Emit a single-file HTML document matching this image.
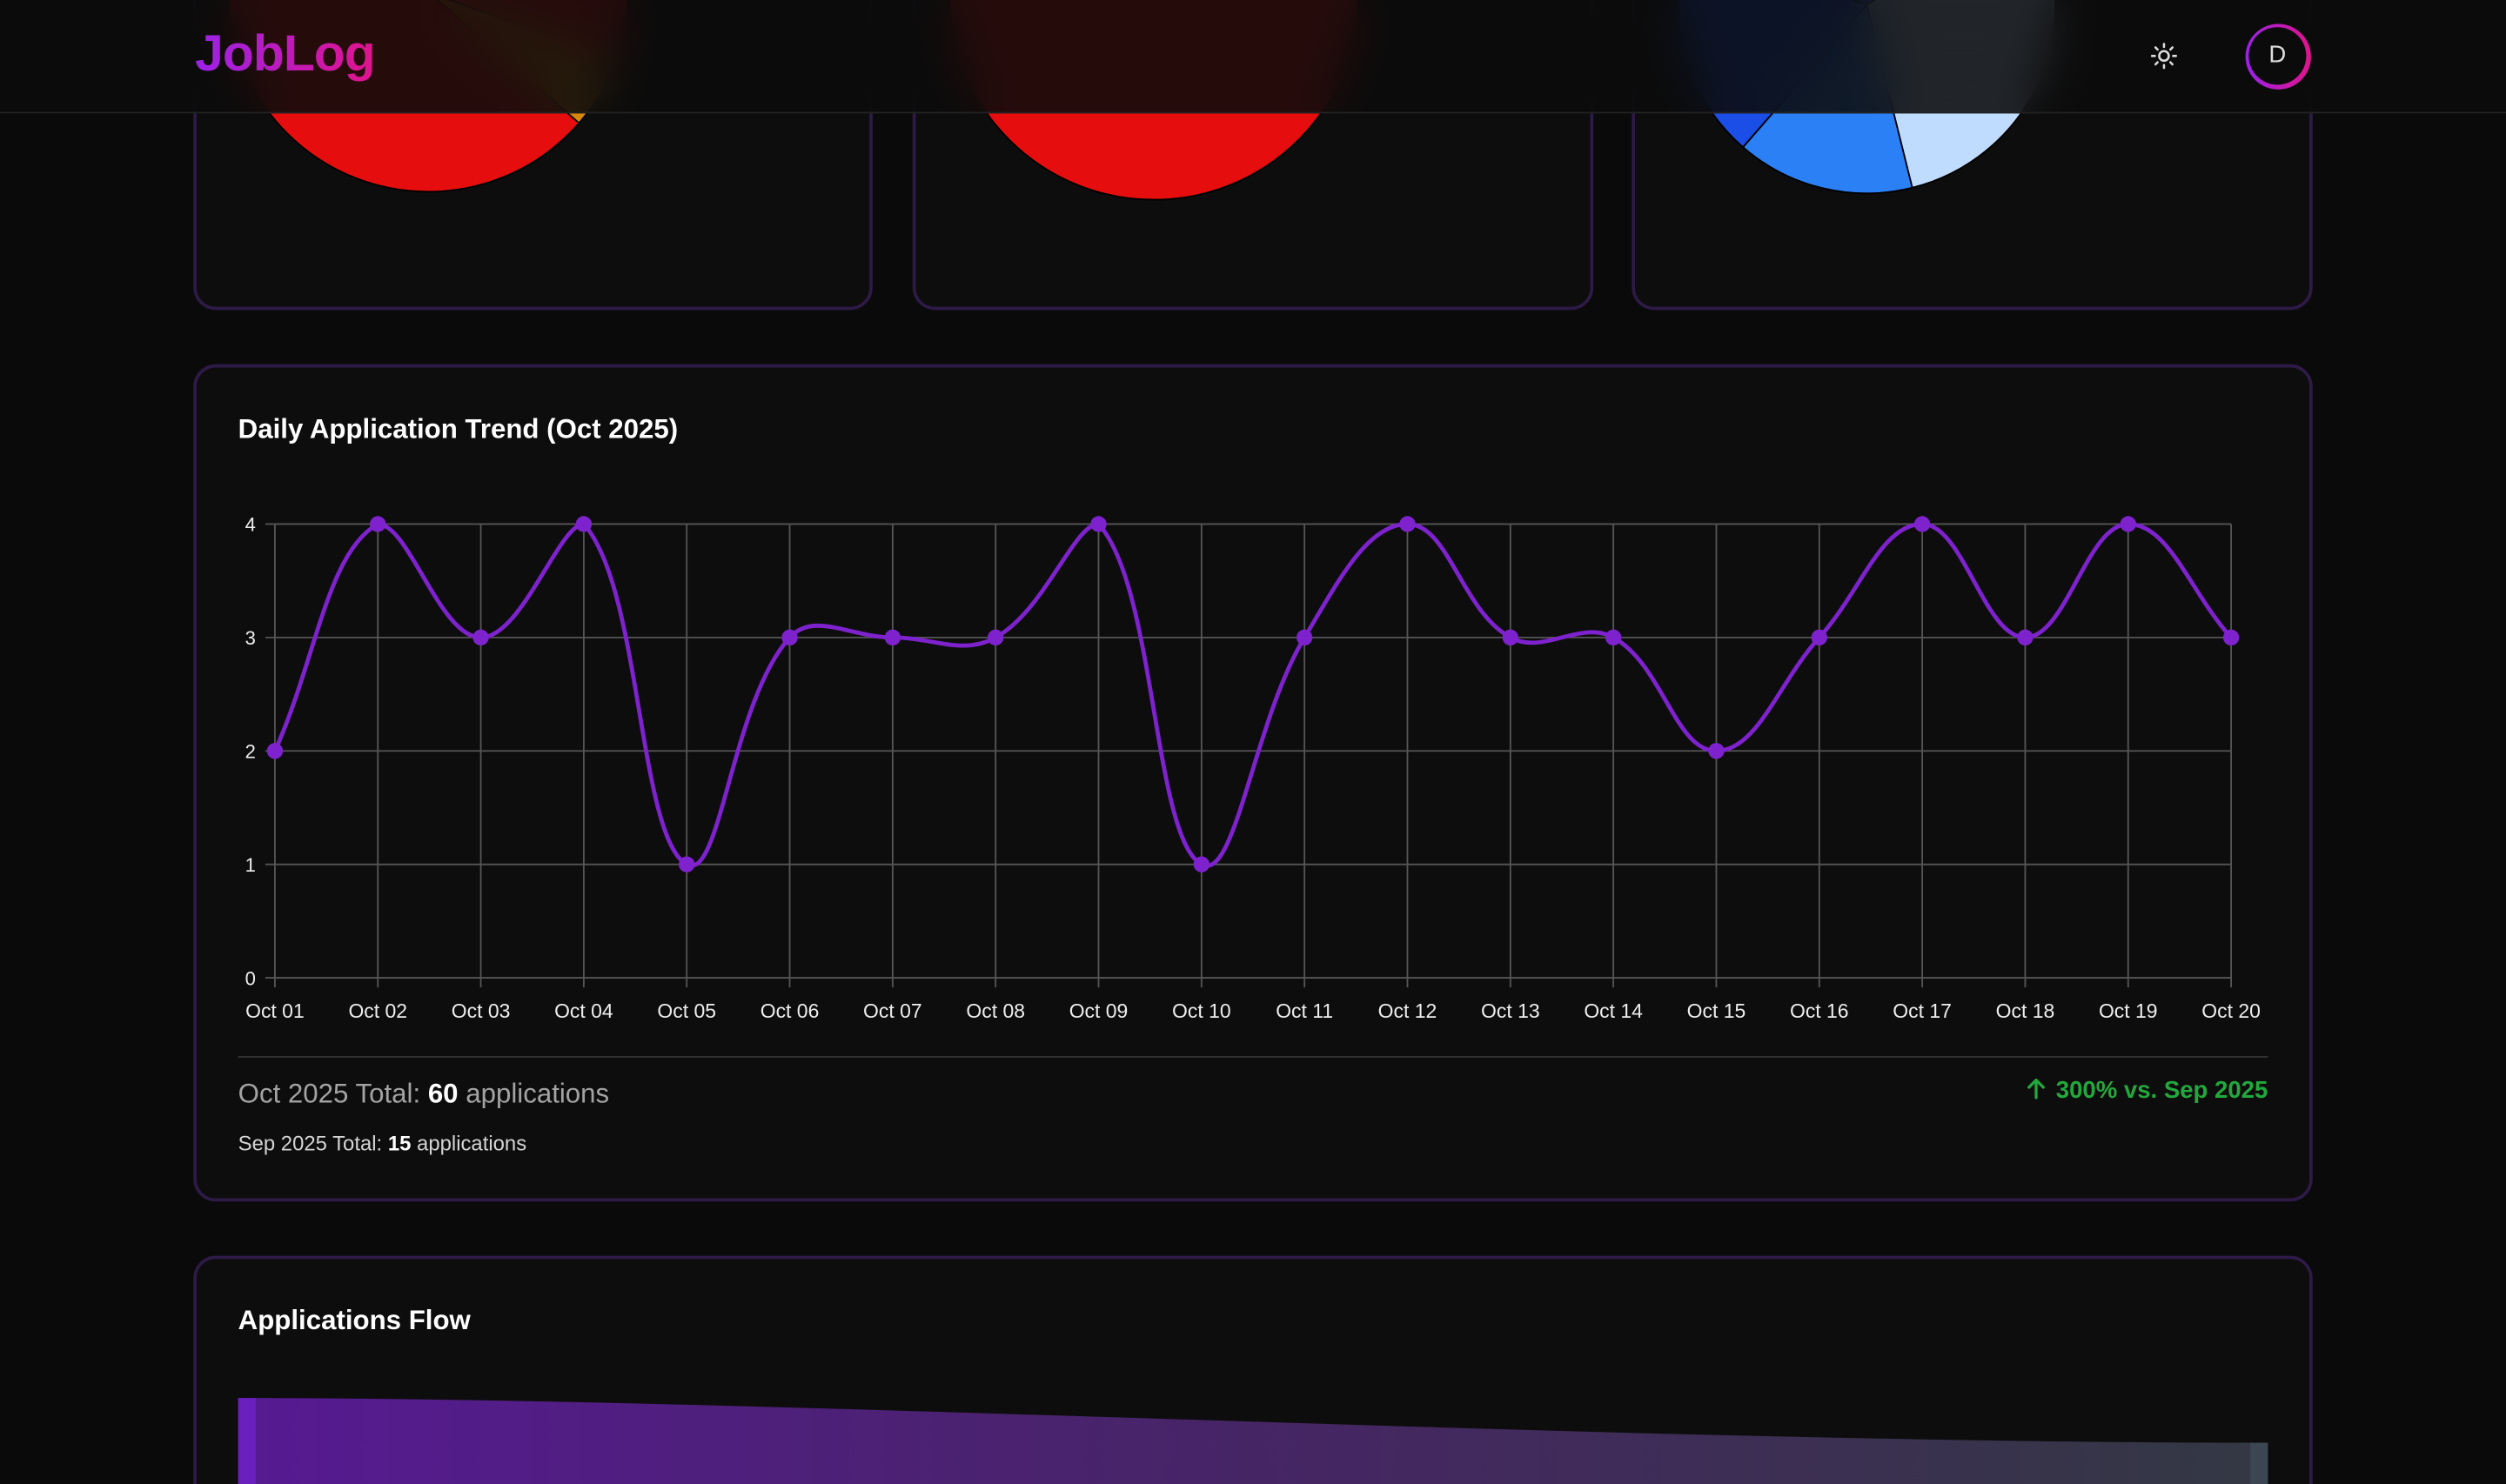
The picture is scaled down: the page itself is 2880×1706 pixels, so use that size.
<!DOCTYPE html>
<html><head><meta charset="utf-8">
<style>
html,body{margin:0;padding:0;background:#0a0a0a;overflow:hidden;width:2880px;height:1706px;}
#w{position:absolute;left:0;top:0;width:1568px;height:929px;overflow:hidden;transform:scale(1.836735);transform-origin:0 0;font-family:"Liberation Sans",sans-serif;color:#fff;}
.card{position:absolute;background:#0d0d0d;border:2px solid #2e1a47;border-radius:14px;box-sizing:border-box;}
.hdr{position:absolute;left:0;top:0;width:1568px;height:70px;background:rgba(11,11,11,0.88);backdrop-filter:blur(14px);-webkit-backdrop-filter:blur(14px);border-bottom:1px solid #222;}
</style></head><body><div id="w">
<div class="card" style="left:121px;top:-30px;width:425px;height:224px"></div>
<div class="card" style="left:571px;top:-30px;width:426px;height:224px"></div>
<div class="card" style="left:1021px;top:-30px;width:426px;height:224px"></div>
<svg width="1568" height="200" style="position:absolute;left:0;top:0">
 <circle cx="268" cy="-5" r="125" fill="#e50d0d" stroke="#000" stroke-width="1"/>
 <path d="M268 -5 L385.5 37.8 A125 125 0 0 1 362.3 77 Z" fill="#d9880b" stroke="#000" stroke-width="1"/>
 <circle cx="722" cy="-3" r="128" fill="#e50d0d" stroke="#000" stroke-width="1"/>
 <circle cx="1168" cy="3" r="118" fill="#1a4ee6" stroke="#000" stroke-width="1"/>
 <path d="M1168 3 L1270.2 -56 A118 118 0 0 1 1196.5 117.5 Z" fill="#bfdbfe" stroke="#000" stroke-width="1"/>
 <path d="M1168 3 L1196.5 117.5 A118 118 0 0 1 1090.6 92.1 Z" fill="#2b80f5" stroke="#000" stroke-width="1"/>
 <path d="M1168 3 L1090.6 92.1 A118 118 0 0 1 1057.1 -37.4 Z" fill="#1a4ee6" stroke="#000" stroke-width="1"/>
</svg>
<div class="hdr">
 <div style="position:absolute;left:122px;top:15px;font-size:32px;font-weight:bold;letter-spacing:-0.5px;background:linear-gradient(90deg,#9b22e8,#e0148c);-webkit-background-clip:text;background-clip:text;color:transparent;">JobLog</div>
 <svg style="position:absolute;left:1345px;top:26px" width="18" height="18" viewBox="0 0 18 18" fill="none" stroke="#ddd" stroke-width="1.4" stroke-linecap="round"><circle cx="9" cy="9" r="3"/><path d="M9 1.5v1.8M9 14.7v1.8M1.5 9h1.8M14.7 9h1.8M3.7 3.7l1.3 1.3M13 13l1.3 1.3M3.7 14.3l1.3-1.3M13 5l1.3-1.3"/></svg>
 <div style="position:absolute;left:1404.5px;top:14.5px;width:41px;height:41px;border-radius:50%;background:linear-gradient(90deg,#9b22e8,#e0148c);">
  <div style="position:absolute;left:2.5px;top:2.5px;width:36px;height:36px;border-radius:50%;background:#0b0b0b;text-align:center;line-height:36px;font-size:15px;color:#ddd">D</div>
 </div>
</div>

<div class="card" style="left:121px;top:228px;width:1326px;height:524px">
 <div style="position:absolute;left:26px;top:29px;font-size:17px;font-weight:bold;color:#fff">Daily Application Trend (Oct 2025)</div>
 <div style="position:absolute;left:26px;top:431px;width:1270px;height:1px;background:#333"></div>
 <div style="position:absolute;left:26px;top:445px;font-size:17px;color:#a3a3a3">Oct 2025 Total: <b style="color:#fff">60</b> applications</div>
 <div style="position:absolute;left:26px;top:478px;font-size:13px;color:#d4d4d4">Sep 2025 Total: <b style="color:#fff">15</b> applications</div>
 <div style="position:absolute;right:26px;top:444px;font-size:15px;font-weight:bold;color:#22a83c"><svg width="14" height="14" viewBox="0 0 14 14" style="vertical-align:-1px;margin-right:5px" fill="none" stroke="#22a83c" stroke-width="1.8" stroke-linecap="round" stroke-linejoin="round"><path d="M7 13V2M2.5 6.5L7 2l4.5 4.5"/></svg>300% vs. Sep 2025</div>
</div>
<svg id="ch" width="1568" height="929" style="position:absolute;left:0;top:0"></svg>

<div class="card" style="left:121px;top:786px;width:1326px;height:180px">
 <div style="position:absolute;left:26px;top:29px;font-size:17px;font-weight:bold;color:#fff">Applications Flow</div>
</div>
<svg width="1568" height="929" style="position:absolute;left:0;top:0">
 <defs><linearGradient id="fg" x1="0" x2="1" y1="0" y2="0"><stop offset="0" stop-color="#561a92"/><stop offset="0.5" stop-color="#462565"/><stop offset="1" stop-color="#333843"/></linearGradient></defs>
 <path d="M149 875 C 500 875, 1000 903, 1419 903 L1419 929 L149 929 Z" fill="url(#fg)"/>
 <rect x="149" y="875" width="11" height="54" fill="#6a1fbf"/>
 <rect x="1408" y="903" width="11" height="26" fill="#3c4652"/>
</svg>
</div>
<script>
var v=[2,4,3,4,1,3,3,3,4,1,3,4,3,3,2,3,4,3,4,3];
var x0=172,dx=(1396-172)/19,y0=612,dy=71;
var s='';
for(var k=0;k<=4;k++){var y=y0-k*dy;s+='<line x1="166" x2="1396" y1="'+y+'" y2="'+y+'" stroke="#555" stroke-width="1"/>';
s+='<text x="160" y="'+(y+4.5)+'" fill="#eee" font-size="12" text-anchor="end" font-family="Liberation Sans, sans-serif">'+k+'</text>';}
var P=[];
for(var i=0;i<20;i++){var x=x0+i*dx;P.push([x,y0-v[i]*dy]);
s+='<line x1="'+x+'" x2="'+x+'" y1="328" y2="618" stroke="#555" stroke-width="1"/>';
s+='<text x="'+x+'" y="637" fill="#eee" font-size="12.5" text-anchor="middle" font-family="Liberation Sans, sans-serif">Oct '+(i<9?'0':'')+(i+1)+'</text>';}
function dist(a,b){return Math.sqrt((a[0]-b[0])*(a[0]-b[0])+(a[1]-b[1])*(a[1]-b[1]));}
var cp=[];var t=0.4;
for(var i=0;i<20;i++){var a=P[i>0?i-1:i],b=P[i],c=P[i<19?i+1:i];
var d01=dist(a,b),d12=dist(b,c),sum=d01+d12||1;var fa=t*d01/sum,fb=t*d12/sum;
var pv=[b[0]-fa*(c[0]-a[0]),b[1]-fa*(c[1]-a[1])],nx=[b[0]+fb*(c[0]-a[0]),b[1]+fb*(c[1]-a[1])];
pv[1]=Math.max(328,Math.min(612,pv[1]));nx[1]=Math.max(328,Math.min(612,nx[1]));
cp.push([pv,nx]);}
var d='M'+P[0][0]+' '+P[0][1];
for(var i=0;i<19;i++){d+=' C'+cp[i][1][0]+' '+cp[i][1][1]+' '+cp[i+1][0][0]+' '+cp[i+1][0][1]+' '+P[i+1][0]+' '+P[i+1][1];}
s+='<path d="'+d+'" fill="none" stroke="#7e22ce" stroke-width="2.6"/>';
for(var i=0;i<20;i++)s+='<circle cx="'+P[i][0]+'" cy="'+P[i][1]+'" r="5" fill="#7e22ce"/>';
document.getElementById('ch').innerHTML=s;
</script>
</body></html>
